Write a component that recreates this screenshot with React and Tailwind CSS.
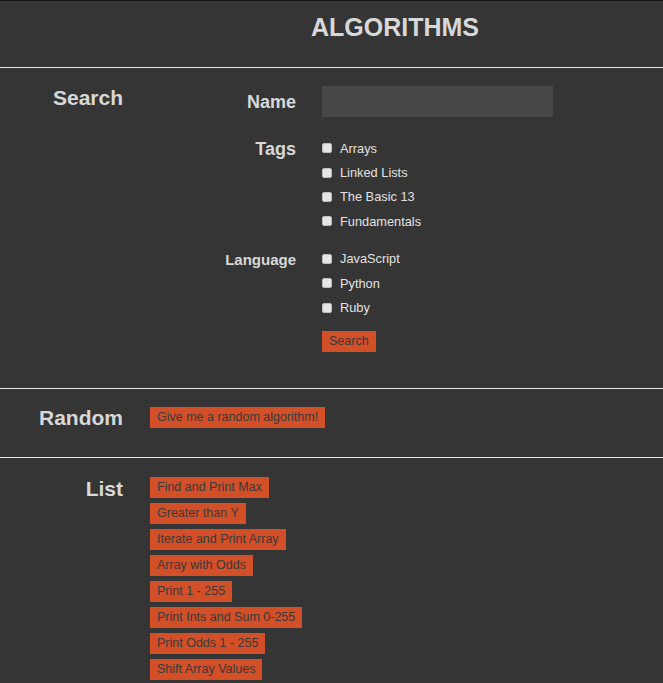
import React from "react";

const font = { fontFamily: '"Liberation Sans", Arial, sans-serif' };

function Btn({ children }) {
  return (
    <button className="block h-[21px] px-[7px] bg-[#d24f27] text-[#3a3a3a] text-[12.5px] leading-[21px] whitespace-nowrap">
      {children}
    </button>
  );
}

function Check({ label }) {
  return (
    <label className="flex items-center h-[24.4px]">
      <span className="w-[10px] h-[10px] rounded-[2px] bg-[#e6e6e6] border border-[#bdbdbd]" />
      <span className="ml-[8px] text-[12.8px] text-[#e2e2e2]">{label}</span>
    </label>
  );
}

function Section({ label, children, className = "", labelLeading = "leading-[24px]" }) {
  return (
    <div className={"flex " + className}>
      <div className={"w-[123px] shrink-0 text-right text-[21px] font-bold text-[#d8d8d8] " + labelLeading}>
        {label}
      </div>
      <div className="ml-[27px] flex-1 flex flex-col items-start">{children}</div>
    </div>
  );
}

const items = [
  "Find and Print Max",
  "Greater than Y",
  "Iterate and Print Array",
  "Array with Odds",
  "Print 1 - 255",
  "Print Ints and Sum 0-255",
  "Print Odds 1 - 255",
  "Shift Array Values",
];

export default function App() {
  return (
    <div style={font} className="min-h-screen bg-[#353535] border-t border-[#151515] overflow-hidden h-[683px]">
      <div className="flex h-[66px]">
        <div className="w-[123px] shrink-0" />
        <div className="ml-[27px] mr-[23px] flex-1 text-center pt-[12px] text-[25px] leading-[28px] font-bold text-[#d8d8d8]">
          ALGORITHMS
        </div>
      </div>
      <div className="h-px bg-[#e8e8e8]" />

      <Section label="Search" className="pt-[18px] pb-[36px]">
        <div className="flex flex-col">
          <div className="flex items-center">
            <div className="w-[146px] text-right text-[18px] font-bold text-[#d8d8d8] pt-[2px]">Name</div>
            <div className="ml-[26px] w-[231px] h-[31px] bg-[#474747]" />
          </div>
          <div className="flex mt-[20px]">
            <div className="w-[146px] text-right text-[18px] font-bold text-[#d8d8d8] leading-[22px] pt-[1px]">Tags</div>
            <div className="ml-[26px] flex flex-col -mt-[1px]">
              <Check label="Arrays" />
              <Check label="Linked Lists" />
              <Check label="The Basic 13" />
              <Check label="Fundamentals" />
            </div>
          </div>
          <div className="flex mt-[14px]">
            <div className="w-[146px] text-right text-[15px] font-bold text-[#d8d8d8] leading-[22px] pt-[1px]">Language</div>
            <div className="ml-[26px] flex flex-col items-start -mt-[1px]">
              <Check label="JavaScript" />
              <Check label="Python" />
              <Check label="Ruby" />
              <div className="mt-[11px] flex">
                <Btn>Search</Btn>
              </div>
            </div>
          </div>
        </div>
      </Section>
      <div className="h-px bg-[#e8e8e8]" />

      <Section label="Random" labelLeading="leading-[21px]" className="pt-[18px] pb-[29px]">
        <Btn>Give me a random algorithm!</Btn>
      </Section>
      <div className="h-px bg-[#e8e8e8]" />

      <Section label="List" className="pt-[19px]">
        <div className="flex flex-col items-start gap-[5px]">
          {items.map((t) => (
            <Btn key={t}>{t}</Btn>
          ))}
        </div>
      </Section>
    </div>
  );
}
